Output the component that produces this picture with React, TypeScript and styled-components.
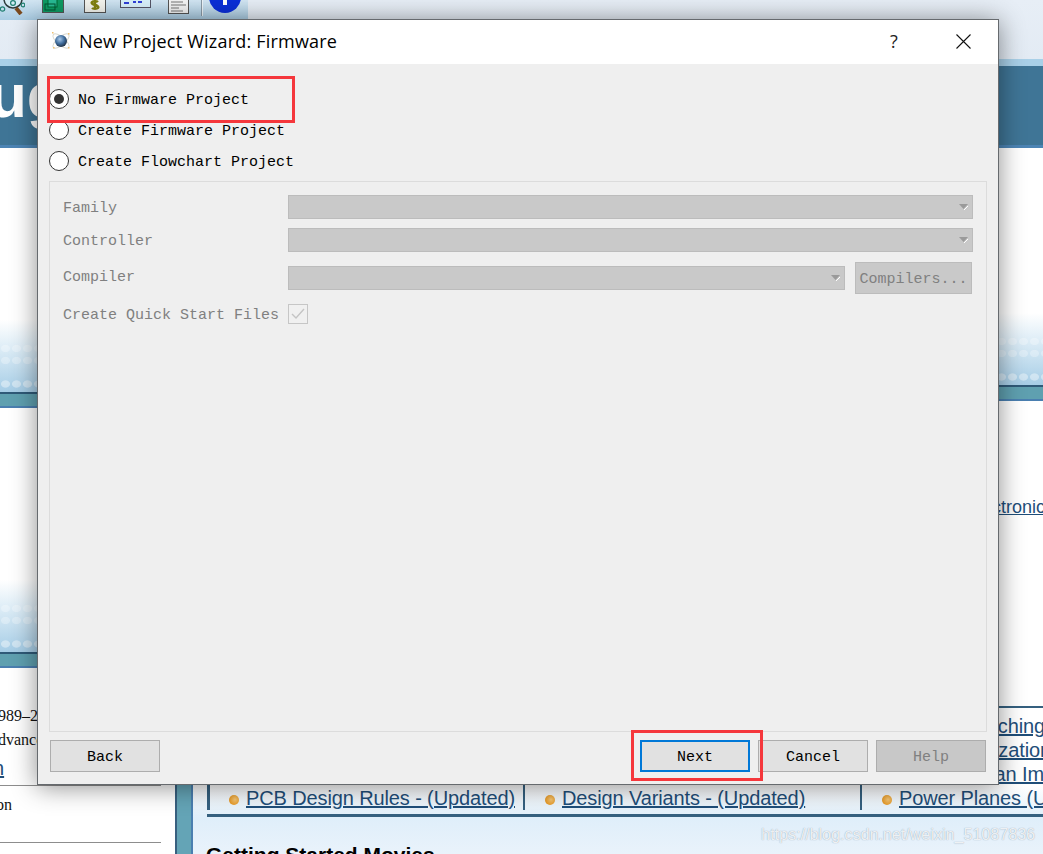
import React from 'react';
import styled, { createGlobalStyle } from 'styled-components';

const GlobalStyle = createGlobalStyle`
  html, body {
    margin: 0;
    padding: 0;
    background: #fff;
  }
  * {
    box-sizing: border-box;
  }
`;

const Page = styled.div`
  position: relative;
  width: 1043px;
  height: 854px;
  overflow: hidden;
  background: #fff;
  font-family: "Liberation Sans", Arial, sans-serif;
`;

/* background application */
const TopArea = styled.div`
  height: 59px;
  background: linear-gradient(to bottom, #e7eef6, #e3ebf4);
`;

const Toolbar = styled.div`
  display: flex;
  align-items: flex-start;
  width: 248px;
  height: 20px;
  background: linear-gradient(to bottom, #d3e6f3, #aacde4);
`;

const ToolSlot = styled.div<{ $left: number }>`
  display: flex;
  margin-left: ${p => p.$left}px;
`;

const Banner = styled.div`
  height: 89px;
  overflow: hidden;
  background: #3f7596;
  border-top: 7px solid #a9d0e8;
  border-bottom: 3px solid #4c84b4;
`;

const BannerTitle = styled.div`
  margin: -10px 0 0 -11px;
  color: #fff;
  font-size: 62px;
  font-weight: 700;
  line-height: 80px;
`;

const Columns = styled.div`
  display: grid;
  grid-template-columns: 175px 868px;
`;

const LeftColumn = styled.div`
  display: flex;
  flex-direction: column;
`;

const RightColumn = styled.div`
  display: flex;
`;

const Strip = styled.div`
  width: 18px;
  flex: none;
  background: #64a4b6;
  border-left: 2px solid #38607f;
  border-right: 2px solid #4a7fb0;
`;

const Content = styled.div`
  flex: 1;
  min-width: 0;
  display: flex;
  flex-direction: column;
  overflow: hidden;
`;

const Blank = styled.div<{ $h: number }>`
  height: ${p => p.$h}px;
  flex: none;
`;

const Fade = styled.div`
  height: 72px;
  flex: none;
  background:
    radial-gradient(ellipse 5px 4px, rgba(255, 255, 255, 0.28) 80%, transparent) 0 25px / 11px 7px repeat-x,
    radial-gradient(ellipse 5px 4px, rgba(255, 255, 255, 0.28) 80%, transparent) 0 37px / 11px 7px repeat-x,
    radial-gradient(ellipse 5px 4px, rgba(255, 255, 255, 0.4) 80%, transparent) 0 60px / 11px 8px repeat-x,
    linear-gradient(to bottom, #fff 0%, #dcecf6 40%, #a6cde6 100%);
`;

const Band = styled.div`
  height: 16px;
  flex: none;
  background: #5fa0b0;
  border-top: 2px solid #2f5a78;
  border-bottom: 2px solid #4a7fb0;
`;

const FootLine = styled.div<{ $h?: number; $left?: number }>`
  height: ${p => p.$h ?? 24}px;
  display: flex;
  align-items: center;
  margin-left: ${p => p.$left ?? -2}px;
  font-family: "Liberation Serif", serif;
  font-size: 16px;
  color: #111;
  white-space: nowrap;
`;

const FootLink = styled.span`
  font-family: "Liberation Sans", Arial, sans-serif;
  font-size: 20px;
  text-decoration: underline;
  color: #1f4e79;
`;

const Rule = styled.div`
  width: 161px;
  height: 1px;
  flex: none;
  background: #8d8d8d;
`;

const ProseLink = styled.a`
  display: block;
  height: 24px;
  margin-left: 688px;
  color: #1f4e79;
  font-size: 18px;
  line-height: 24px;
  text-decoration: underline;
  white-space: nowrap;
`;

const TableZone = styled.div`
  flex: none;
  padding: 0 0 0 14px;
  background: linear-gradient(to bottom, #fff 0, #fff 80px, #dfeefa 112px, #eaf3fb 150px);
`;

const LinkTable = styled.div`
  width: 900px;
  padding: 6px 0 4px;
  border-top: 2px solid #35607f;
  border-bottom: 3px solid #35607f;
`;

const LinkRow = styled.div`
  display: grid;
  grid-template-columns: 316px 337px 1fr;
  height: 24px;
`;

const LinkCell = styled.div<{ $first?: boolean }>`
  display: flex;
  align-items: center;
  gap: 7px;
  padding-left: ${p => (p.$first ? 19 : 20)}px;
  border-left: ${p => (p.$first ? 3 : 2)}px solid #35607f;
  white-space: nowrap;
`;

const Bullet = styled.span`
  width: 10px;
  height: 10px;
  flex: none;
  margin-top: 3px;
  border-radius: 50%;
  background: radial-gradient(circle at 60% 45%, #f7c877, #e89a26 70%);
`;

const TableLink = styled.a`
  color: #1f4e79;
  font-size: 20px;
  line-height: 24px;
  letter-spacing: -0.12px;
  text-decoration: underline;
`;

const BelowTable = styled.div`
  height: 38px;
  padding-top: 26px;
`;

const MoviesTitle = styled.div`
  margin-left: -1px;
  color: #000;
  font-size: 21px;
  font-weight: 700;
  line-height: 24px;
  white-space: nowrap;
`;

const Watermark = styled.div`
  position: absolute;
  left: 761px;
  top: 826px;
  color: rgba(255, 255, 255, 0.85);
  font-size: 16px;
  line-height: 18px;
  letter-spacing: 0.05px;
  text-shadow: 0 0 1px rgba(120, 140, 160, 0.9);
`;

/* dialog */
const Dialog = styled.div`
  position: absolute;
  left: 37px;
  top: 19px;
  width: 962px;
  height: 766px;
  display: flex;
  flex-direction: column;
  background: #efefef;
  border: 1px solid #666a6e;
  box-shadow: 0 2px 24px rgba(0, 0, 0, 0.45);
`;

const TitleBar = styled.div`
  height: 44px;
  flex: none;
  display: flex;
  align-items: center;
  background: #fff;
  padding: 0 0 2px 13px;
`;

const TitleIcon = styled.svg`
  width: 20px;
  height: 20px;
  flex: none;
`;

const TitleText = styled.div`
  margin-left: 8px;
  flex: 1;
  font-family: "Open Sans", "Noto Sans", sans-serif;
  font-size: 18px;
  letter-spacing: 0.21px;
  color: #000;
`;

const HelpMark = styled.div`
  width: 20px;
  margin-right: 52px;
  text-align: center;
  font-family: "Open Sans", sans-serif;
  font-size: 18px;
  color: #222;
`;

const CloseIcon = styled.svg`
  width: 15px;
  height: 15px;
  flex: none;
  margin-right: 27px;
`;

const DialogBody = styled.div`
  flex: 1;
  min-height: 0;
  display: flex;
  flex-direction: column;
  padding: 19px 11px 12px;
  font-family: "Liberation Mono", monospace;
  font-size: 15px;
  color: #000;
`;

const RadioRow = styled.label`
  height: 31px;
  flex: none;
  display: flex;
  align-items: center;
  gap: 9px;
`;

const RadioText = styled.span`
  padding-top: 4px;
`;

const RadioMark = styled.span<{ $checked?: boolean }>`
  width: 20px;
  height: 20px;
  flex: none;
  display: flex;
  align-items: center;
  justify-content: center;
  border: 1px solid #333;
  border-radius: 50%;
  background: #fff;
  &::after {
    content: "";
    display: ${p => (p.$checked ? 'block' : 'none')};
    width: 10px;
    height: 10px;
    border-radius: 50%;
    background: #333;
  }
`;

const Panel = styled.div`
  flex: 1;
  min-height: 0;
  margin-top: 5px;
  padding: 13px 13px 0;
  border: 1px solid #dcdcdc;
  display: grid;
  grid-template-columns: 225px 1fr;
  grid-auto-rows: min-content;
  align-items: center;
  color: #808080;
`;

const FieldLabel = styled.div<{ $gap: number; $lift?: boolean }>`
  margin-top: ${p => p.$gap}px;
  padding: ${p => (p.$lift ? '0 0 2px' : '2px 0 0')};
  white-space: nowrap;
`;

const FieldRow = styled.div<{ $gap: number }>`
  margin-top: ${p => p.$gap}px;
  display: flex;
  align-items: center;
  gap: 10px;
`;

const SelectBox = styled.div`
  flex: 1;
  height: 24px;
  display: flex;
  align-items: center;
  justify-content: flex-end;
  padding-right: 4px;
  background: #c9c9c9;
  border: 1px solid #bcbcbc;
`;

const SelectArrow = styled.svg`
  width: 9px;
  height: 6px;
`;

const PanelButton = styled.div`
  width: 117px;
  height: 32px;
  flex: none;
  display: flex;
  align-items: center;
  justify-content: center;
  padding-top: 2px;
  background: #c9c9c9;
  border: 1px solid #bcbcbc;
  margin-right: 1px;
`;

const CheckBox = styled.div`
  width: 20px;
  height: 20px;
  display: flex;
  align-items: center;
  justify-content: center;
  background: #f0f0f0;
  border: 1px solid #c6c6c6;
`;

const Footer = styled.div`
  height: 32px;
  flex: none;
  margin-top: 8px;
  padding: 0 1px;
  display: flex;
  gap: 8px;
`;

const FooterButton = styled.div<{ $focus?: boolean; $disabled?: boolean; $push?: boolean }>`
  width: 110px;
  height: 32px;
  display: flex;
  align-items: center;
  justify-content: center;
  padding-top: 2px;
  margin-left: ${p => (p.$push ? 'auto' : '0')};
  background: ${p => (p.$disabled ? '#c8c8c8' : '#e1e1e1')};
  border: ${p => (p.$focus ? '2px solid #0078d7' : '1px solid #adadad')};
  color: ${p => (p.$disabled ? '#808080' : '#000')};
`;

const RedMark = styled.div<{ $x: number; $y: number; $w: number; $h: number }>`
  position: absolute;
  left: ${p => p.$x}px;
  top: ${p => p.$y}px;
  width: ${p => p.$w}px;
  height: ${p => p.$h}px;
  border: 3px solid #f5373c;
  pointer-events: none;
`;

const tableRows: [string, string, string][] = [
  ['', '', 'Length Matching'],
  ['', '', 'Part Visualization'],
  ['', '', 'Drawing Plan Import'],
  ['PCB Design Rules - (Updated)', 'Design Variants - (Updated)', 'Power Planes (Updated)'],
];

const Arrow = () => (
  <SelectArrow viewBox="0 0 9 6">
    <path d="M0 0h9L4.5 5z" fill="#9a9a9a" />
    <path d="M5 6l4-4" stroke="#fff" strokeWidth="1" />
  </SelectArrow>
);

const ToolIcons = () => (
  <>
    <ToolSlot $left={0}>
      <svg width="25" height="15" viewBox="0 0 25 15">
        <circle cx="13" cy="-1" r="9" fill="#d5ecf4" stroke="#2c3a3a" strokeWidth="1.5" />
        <circle cx="2.5" cy="9" r="2.2" fill="none" stroke="#1f7f70" strokeWidth="1.2" />
        <circle cx="13" cy="3" r="2.4" fill="none" stroke="#1f7f70" strokeWidth="1.2" />
        <circle cx="23" cy="5" r="1.8" fill="none" stroke="#1f7f70" strokeWidth="1.2" />
        <path d="M16 8l5 6" stroke="#7b4a1e" strokeWidth="4" />
      </svg>
    </ToolSlot>
    <ToolSlot $left={17}>
      <svg width="22" height="13" viewBox="0 0 22 13">
        <rect x="0.5" y="-1" width="21" height="13.5" fill="#0e9a63" stroke="#555" />
        <rect x="6" y="-1" width="9" height="8" fill="#28b993" stroke="#063" />
        <rect x="3" y="4" width="10" height="6" fill="none" stroke="#053" />
      </svg>
    </ToolSlot>
    <ToolSlot $left={20}>
      <svg width="22" height="13" viewBox="0 0 22 13">
        <rect x="0.5" y="-1" width="21" height="13.5" fill="#f4f4ee" stroke="#555" />
        <path d="M14 2c-1-1-5-1-6 0s1 3 3 3 4 2 3 3-5 1-6 0M11 -1v11" fill="none" stroke="#808010" strokeWidth="2.4" />
      </svg>
    </ToolSlot>
    <ToolSlot $left={14}>
      <svg width="31" height="8" viewBox="0 0 31 8">
        <rect x="0.5" y="-1" width="30" height="8.5" fill="#d9f1fb" stroke="#556" />
        <path d="M4 3h5M13 2h3M18 2h4" stroke="#2f40d8" strokeWidth="2" />
      </svg>
    </ToolSlot>
    <ToolSlot $left={17}>
      <svg width="21" height="14" viewBox="0 0 21 14">
        <rect x="0.5" y="-1" width="20" height="14.5" fill="#f4f4f4" stroke="#555" />
        <path d="M3 2h12M3 5h15M3 8h8M3 11h12" stroke="#777" />
      </svg>
    </ToolSlot>
    <ToolSlot $left={12}>
      <svg width="2" height="16" viewBox="0 0 2 16">
        <rect width="1" height="16" fill="#8a9aa6" />
        <rect x="1" width="1" height="16" fill="#eef5fa" />
      </svg>
    </ToolSlot>
    <ToolSlot $left={6}>
      <svg width="32" height="13" viewBox="0 0 32 13">
        <circle cx="16" cy="-3" r="16" fill="#0b2fd8" />
        <rect x="14" y="-1" width="4" height="6" fill="#fff" />
      </svg>
    </ToolSlot>
  </>
);

const App: React.FC = () => {
  return (
    <>
      <GlobalStyle />
      <Page>
        <TopArea>
          <Toolbar>
            <ToolIcons />
          </Toolbar>
        </TopArea>
        <Banner>
          <BannerTitle>ug</BannerTitle>
        </Banner>
        <Columns>
          <LeftColumn>
            <Blank $h={172} />
            <Fade />
            <Band />
            <Blank $h={172} />
            <Fade />
            <Band />
            <Blank $h={36} />
            <FootLine>989–2018</FootLine>
            <FootLine>dvanced</FootLine>
            <FootLine $h={33} $left={-7}>
              <FootLink>n</FootLink>
            </FootLine>
            <Rule />
            <FootLine $h={38} $left={-4}>on</FootLine>
            <Blank $h={18} />
            <Rule />
          </LeftColumn>
          <RightColumn>
            <Strip />
            <Content>
              <Blank $h={165} />
              <Fade />
              <Band />
              <Blank $h={94} />
              <ProseLink>Labcenter Electronics</ProseLink>
              <Blank $h={187} />
              <TableZone>
                <LinkTable>
                  {tableRows.map((row, i) => (
                    <LinkRow key={i}>
                      {row.map((text, j) => (
                        <LinkCell key={j} $first={j === 0}>
                          {text && <Bullet />}
                          {text && <TableLink>{text}</TableLink>}
                        </LinkCell>
                      ))}
                    </LinkRow>
                  ))}
                </LinkTable>
                <BelowTable>
                  <MoviesTitle>Getting Started Movies</MoviesTitle>
                </BelowTable>
              </TableZone>
            </Content>
          </RightColumn>
        </Columns>
        <Watermark>https://blog.csdn.net/weixin_51087836</Watermark>

        <Dialog>
          <TitleBar>
            <TitleIcon viewBox="0 0 20 20">
              <defs>
                <radialGradient id="globe" cx="0.4" cy="0.35" r="0.7">
                  <stop offset="0" stopColor="#a9c8e8" />
                  <stop offset="0.55" stopColor="#3f6c9c" />
                  <stop offset="1" stopColor="#1d2a3a" />
                </radialGradient>
              </defs>
              <ellipse cx="10" cy="10" rx="10" ry="4" fill="none" stroke="#d8d8d0" transform="rotate(40 10 10)" />
              <ellipse cx="10" cy="10" rx="10" ry="4" fill="none" stroke="#d8d8d0" transform="rotate(-40 10 10)" />
              <circle cx="10" cy="10" r="6" fill="url(#globe)" />
              <rect x="1" y="1" width="1.5" height="1.5" fill="#f0c070" />
              <rect x="17" y="2" width="1.5" height="1.5" fill="#f0c070" />
              <rect x="2" y="16" width="1.5" height="1.5" fill="#f0c070" />
              <rect x="17" y="16" width="1.5" height="1.5" fill="#f0c070" />
            </TitleIcon>
            <TitleText>New Project Wizard: Firmware</TitleText>
            <HelpMark>?</HelpMark>
            <CloseIcon viewBox="0 0 15 15">
              <path d="M0.5 0.5l14 14M14.5 0.5l-14 14" stroke="#111" strokeWidth="1.1" fill="none" />
            </CloseIcon>
          </TitleBar>
          <DialogBody>
            <RadioRow>
              <RadioMark $checked />
              <RadioText>No Firmware Project</RadioText>
            </RadioRow>
            <RadioRow>
              <RadioMark />
              <RadioText>Create Firmware Project</RadioText>
            </RadioRow>
            <RadioRow>
              <RadioMark />
              <RadioText>Create Flowchart Project</RadioText>
            </RadioRow>
            <Panel>
              <FieldLabel $gap={0}>Family</FieldLabel>
              <FieldRow $gap={0}>
                <SelectBox>
                  <Arrow />
                </SelectBox>
              </FieldRow>
              <FieldLabel $gap={9}>Controller</FieldLabel>
              <FieldRow $gap={9}>
                <SelectBox>
                  <Arrow />
                </SelectBox>
              </FieldRow>
              <FieldLabel $gap={10} $lift>Compiler</FieldLabel>
              <FieldRow $gap={10}>
                <SelectBox>
                  <Arrow />
                </SelectBox>
                <PanelButton>Compilers...</PanelButton>
              </FieldRow>
              <FieldLabel $gap={10}>Create Quick Start Files</FieldLabel>
              <FieldRow $gap={10}>
                <CheckBox>
                  <svg width="14" height="12" viewBox="0 0 14 12">
                    <path d="M1 6l4 4 8-9" fill="none" stroke="#c4c4c4" strokeWidth="1.4" />
                  </svg>
                </CheckBox>
              </FieldRow>
            </Panel>
            <Footer>
              <FooterButton>Back</FooterButton>
              <FooterButton $push $focus>
                Next
              </FooterButton>
              <FooterButton>Cancel</FooterButton>
              <FooterButton $disabled>Help</FooterButton>
            </Footer>
          </DialogBody>
          <RedMark $x={9} $y={56} $w={248} $h={47} />
          <RedMark $x={593} $y={710} $w={132} $h={51} />
        </Dialog>
      </Page>
    </>
  );
};

export default App;
